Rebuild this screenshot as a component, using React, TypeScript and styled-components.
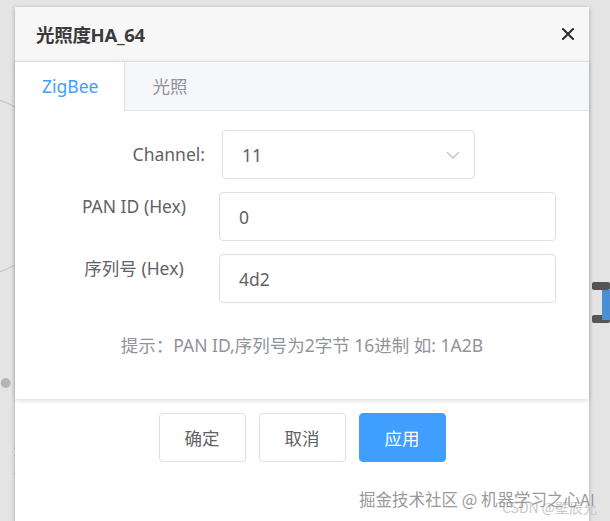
import React from 'react';
import styled, { createGlobalStyle } from 'styled-components';

const GlobalStyle = createGlobalStyle`
  html, body {
    margin: 0;
    padding: 0;
  }
  body {
    background: #e4e4e4;
    font-family: 'Noto Sans', 'Noto Sans CJK SC', sans-serif;
  }
`;

const rows = [
  { label: 'PAN ID (Hex)', value: '0' },
  { label: '序列号 (Hex)', value: '4d2' }
];

const buttons = [
  { text: '确定', primary: false },
  { text: '取消', primary: false },
  { text: '应用', primary: true }
];

export const App = () => {
  return (
    <Page>
      <GlobalStyle />
      <Backdrop>
        <NodeRing style={ { left: -120, top: 95 } }>
          <NodeText>照度<br />列号</NodeText>
        </NodeRing>
        <NodeRing $dotted style={ { left: -150, top: 360 } }>
          <NodeText>烟<br />病</NodeText>
        </NodeRing>
        <Block style={ { left: 592, top: 282 } } />
        <Block style={ { left: 592, top: 315 } } />
        <BlueBar style={ { left: 602, top: 290 } } />
      </Backdrop>

      <Dialog>
        <Header>
          <Title>光照度HA_64</Title>
          <CloseButton aria-label="close">
            <svg width="12" height="12" viewBox="0 0 12 12">
              <path d="M1 1 L11 11 M11 1 L1 11" stroke="#2b2b2b" strokeWidth="2" strokeLinecap="round" />
            </svg>
          </CloseButton>
        </Header>

        <TabCard>
          <TabBar>
            <Tab $active>ZigBee</Tab>
            <Tab>光照</Tab>
          </TabBar>

          <TabBody>
            <FormRow $labelWidth={ 139 }>
              <Label $align="right" $centered>Channel:</Label>
              <Select>
                <span>11</span>
                <svg width="14" height="8" viewBox="0 0 14 8">
                  <path d="M1 1 L7 7 L13 1" fill="none" stroke="#c0c4cc" strokeWidth="1.3" />
                </svg>
              </Select>
            </FormRow>
            {
              rows.map((row) => (
                <FormRow key={ row.label } $labelWidth={ 136 }>
                  <Label $align="center">{ row.label }</Label>
                  <Input>{ row.value }</Input>
                </FormRow>
              ))
            }
            <Hint>提示：PAN ID,序列号为2字节 16进制 如: 1A2B</Hint>
          </TabBody>
        </TabCard>

        <Footer>
          {
            buttons.map((b) => (
              <Button key={ b.text } $primary={ b.primary }>{ b.text }</Button>
            ))
          }
        </Footer>
      </Dialog>

      <Watermark>
        <WatermarkBack>CSDN @壁辰允</WatermarkBack>
        <WatermarkFront>掘金技术社区 @ 机器学习之心AI</WatermarkFront>
      </Watermark>
    </Page>
  );
};

export default App;

const Page = styled.div`
  position: relative;
  width: 610px;
  height: 521px;
  overflow: hidden;
  padding-top: 7px;
  box-sizing: border-box;
`;

const Backdrop = styled.div`
  position: absolute;
  inset: 0;
`;

const NodeRing = styled.div<{ $dotted?: boolean }>`
  position: absolute;
  width: 180px;
  height: 180px;
  border-radius: 50%;
  border: ${ (p) => (p.$dotted ? '10px dotted #b5b5b5' : '1px solid #bdbdbd') };
  display: flex;
  align-items: center;
  justify-content: flex-end;
`;

const NodeText = styled.div`
  font-size: 14px;
  line-height: 22px;
  color: #777;
  margin-right: 12px;
`;

const Block = styled.div`
  position: absolute;
  width: 18px;
  height: 8px;
  background: #555;
  border-radius: 2px;
`;

const BlueBar = styled.div`
  position: absolute;
  width: 8px;
  height: 30px;
  background: #4a8fd6;
`;

const Dialog = styled.div`
  position: relative;
  margin-left: 15px;
  width: 574px;
  height: 540px;
  background: #fff;
  box-shadow: 0 1px 4px rgba(0, 0, 0, 0.28);
`;

const Header = styled.div`
  height: 54px;
  box-sizing: border-box;
  padding: 0 15px 0 21px;
  background: #f7f7f7;
  display: flex;
  align-items: center;
  justify-content: space-between;
`;

const Title = styled.div`
  font-size: 18.5px;
  font-weight: 700;
  color: #3a3a3a;
  letter-spacing: -0.3px;
`;

const CloseButton = styled.button`
  border: none;
  background: none;
  padding: 0;
  width: 12px;
  height: 12px;
  display: flex;
  cursor: pointer;
`;

const TabCard = styled.div`
  border-top: 1px solid #dcdfe6;
  box-shadow: 0 2px 4px rgba(0, 0, 0, 0.1), 0 0 6px rgba(0, 0, 0, 0.04);
`;

const TabBar = styled.div`
  display: flex;
  height: 49px;
  box-sizing: border-box;
  background: #f5f7fa;
  border-bottom: 1px solid #e4e7ed;
`;

const Tab = styled.div<{ $active?: boolean }>`
  padding: 0 26px 0 27px;
  height: 49px;
  box-sizing: border-box;
  line-height: 48px;
  font-size: 17.5px;
  color: ${ (p) => (p.$active ? '#409eff' : '#909399') };
  background: ${ (p) => (p.$active ? '#fff' : 'transparent') };
  border-right: ${ (p) => (p.$active ? '1px solid #dcdfe6' : 'none') };
`;

const TabBody = styled.div`
  padding: 19px 0 42px 51px;
  display: flex;
  flex-direction: column;
  gap: 13px;
`;

const FormRow = styled.div<{ $labelWidth: number }>`
  display: grid;
  grid-template-columns: ${ (p) => p.$labelWidth }px auto;
  column-gap: 17px;
  align-items: start;
`;

const Label = styled.div<{ $align: string; $centered?: boolean }>`
  text-align: ${ (p) => p.$align };
  font-size: 17.5px;
  color: #606266;
  line-height: ${ (p) => (p.$centered ? '49px' : '28px') };
`;

const Select = styled.div`
  width: 253px;
  height: 49px;
  box-sizing: border-box;
  border: 1px solid #dcdfe6;
  border-radius: 4px;
  padding: 0 14px 0 19px;
  display: flex;
  align-items: center;
  justify-content: space-between;
  font-size: 17.5px;
  color: #606266;
`;

const Input = styled.div`
  width: 337px;
  height: 49px;
  box-sizing: border-box;
  border: 1px solid #dcdfe6;
  border-radius: 4px;
  padding: 0 19px;
  display: flex;
  align-items: center;
  font-size: 17.5px;
  color: #606266;
`;

const Hint = styled.div`
  margin: 17px 0 0 -51px;
  text-align: center;
  font-size: 17.5px;
  line-height: 24px;
  color: #909399;
`;

const Footer = styled.div`
  display: flex;
  justify-content: center;
  gap: 13px;
  padding-top: 14px;
`;

const Button = styled.button<{ $primary?: boolean }>`
  width: 87px;
  height: 49px;
  border-radius: 4px;
  font-family: 'Noto Sans CJK SC', sans-serif;
  font-size: 17.5px;
  border: 1px solid ${ (p) => (p.$primary ? '#409eff' : '#dcdfe6') };
  background: ${ (p) => (p.$primary ? '#409eff' : '#fff') };
  color: ${ (p) => (p.$primary ? '#fff' : '#606266') };
  cursor: pointer;
`;

const Watermark = styled.div`
  position: absolute;
  left: 359px;
  top: 487px;
  width: 240px;
  height: 28px;
`;

const WatermarkFront = styled.div`
  position: absolute;
  left: 0;
  top: 0;
  font-family: 'Noto Sans CJK SC', sans-serif;
  font-size: 16.5px;
  color: #9a9a9a;
  white-space: nowrap;
  text-shadow: 0 0 1px #fff;
`;

const WatermarkBack = styled.div`
  position: absolute;
  left: 143px;
  top: 10px;
  font-family: 'Noto Sans CJK SC', sans-serif;
  font-size: 14px;
  color: #c9c9c9;
  white-space: nowrap;
`;
